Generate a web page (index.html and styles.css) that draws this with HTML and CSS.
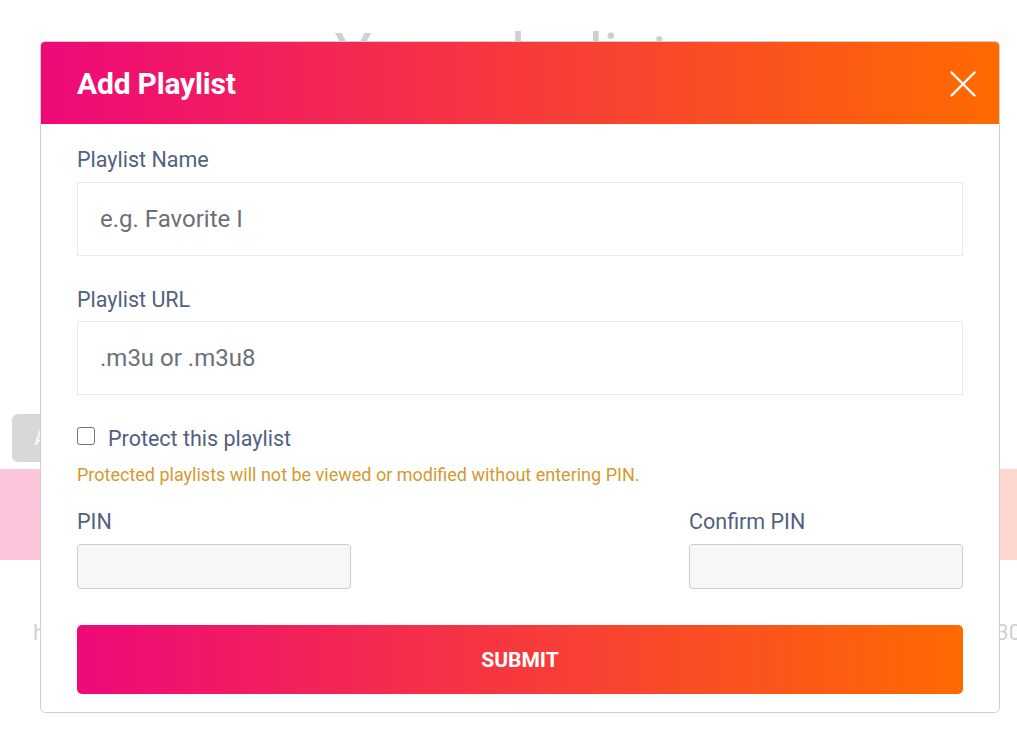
FILE: index.html
```html
<!DOCTYPE html>
<html lang="en">
<head>
<meta charset="utf-8">
<title>Add Playlist</title>
<link rel="stylesheet" href="styles.css">
</head>
<body>
<div class="page">
  <h1 class="page-title">Your playlists</h1>
  <div class="toolbar">
    <button class="ghost-btn" type="button">Add</button>
  </div>
  <div class="band"></div>
  <div class="foot-row">
    <span class="foot-left">http</span>
    <span class="foot-right">30</span>
  </div>
</div>

<div class="modal">
  <div class="modal-header">
    <h2 class="modal-title">Add Playlist</h2>
    <button class="close-btn" type="button" aria-label="Close">
      <svg width="26" height="26" viewBox="0 0 26 26"><path d="M1.5 1.5 L24.5 24.5 M24.5 1.5 L1.5 24.5" stroke="#fff" stroke-width="2.4" stroke-linecap="round" fill="none"/></svg>
    </button>
  </div>
  <form class="modal-body">
    <label class="field-label">Playlist Name</label>
    <input class="text-input" type="text" placeholder="e.g. Favorite I">
    <label class="field-label second">Playlist URL</label>
    <input class="text-input" type="text" placeholder=".m3u or .m3u8">
    <div class="check-row">
      <span class="checkbox"></span>
      <span class="check-text">Protect this playlist</span>
    </div>
    <p class="warning">Protected playlists will not be viewed or modified without entering PIN.</p>
    <div class="pin-row">
      <div class="pin-col">
        <label class="field-label">PIN</label>
        <input class="pin-input" type="password">
      </div>
      <div class="pin-col">
        <label class="field-label">Confirm PIN</label>
        <input class="pin-input" type="password">
      </div>
    </div>
    <button class="submit-btn" type="button">SUBMIT</button>
  </form>
</div>
</body>
</html>
```

FILE: styles.css
```css
* { box-sizing: border-box; }
html, body { margin: 0; padding: 0; }
body {
  font-family: Roboto, "Noto Sans", "Liberation Sans", sans-serif;
  background: #ffffff;
  width: 1017px;
  height: 747px;
  overflow: hidden;
}

/* background page (faded) */
.page { padding-top: 24px; }
.page-title {
  margin: 0;
  text-align: center;
  font-size: 62px;
  line-height: 64px;
  font-weight: 400;
  color: #cfcfcf;
  padding-left: 20px;
  white-space: nowrap;
}
.toolbar {
  margin-top: 326px;
  padding-left: 12px;
  height: 48px;
  display: flex;
}
.ghost-btn {
  width: 90px;
  height: 48px;
  border: none;
  border-radius: 6px;
  background: #d7d8da;
  color: #f4f4f4;
  font: 700 20px Roboto, sans-serif;
  padding-left: 22px;
  text-align: left;
}
.band {
  margin-top: 7px;
  height: 91px;
  background: linear-gradient(to right, #fbc5dd, #fcd0d5 50%, #fdd6cf);
}
.foot-row {
  margin-top: 60px;
  display: flex;
  justify-content: space-between;
  padding: 0 0 0 33px;
  font-size: 22px;
  color: #cdd1d8;
}
.foot-right { margin-right: -4px; }

/* modal */
.modal {
  position: fixed;
  left: 40px;
  top: 41px;
  width: 960px;
  background: #ffffff;
  border: 1px solid #cfcfcf;
  border-radius: 5px;
  overflow: hidden;
}
.modal-header {
  height: 82px;
  background: linear-gradient(to right, #ee0979, #ff6a00);
  display: flex;
  align-items: center;
  justify-content: space-between;
  padding: 0 23px 0 36px;
}
.modal-title {
  margin: 0;
  color: #ffffff;
  font-size: 30px;
  font-weight: 700;
  letter-spacing: -0.2px;
}
.close-btn {
  background: none;
  border: none;
  padding: 0;
  width: 26px;
  height: 26px;
  display: flex;
  margin-top: 2px;
}
.modal-body {
  padding: 21px 36px 18px;
  display: flex;
  flex-direction: column;
  margin: 0;
}
.field-label {
  display: block;
  font-size: 21.5px;
  line-height: 30px;
  color: #525f7f;
  margin-bottom: 7px;
}
.field-label.second { margin-top: 29px; margin-bottom: 6px; }
.text-input {
  width: 100%;
  height: 74px;
  border: 1px solid #e9e9e9;
  border-radius: 0;
  padding: 0 22px;
  font: 400 24px Roboto, sans-serif;
  color: #333;
  outline: none;
}
.text-input::placeholder { color: #6c7077; opacity: 1; }
.check-row {
  margin-top: 28px;
  display: flex;
  align-items: center;
  height: 30px;
}
.checkbox {
  width: 18px;
  height: 18px;
  border: 1.5px solid #767676;
  border-radius: 3px;
  margin-top: -4px;
}
.check-text {
  margin-left: 13px;
  font-size: 21.5px;
  color: #525f7f;
}
.warning {
  margin: 10px 0 0;
  font-size: 18px;
  line-height: 24px;
  color: #d39a30;
}
.pin-row {
  margin-top: 20px;
  display: flex;
  justify-content: space-between;
}
.pin-col { width: 274px; }
.pin-input {
  display: block;
  width: 274px;
  height: 45px;
  border: 1px solid #cccccc;
  border-radius: 4px;
  background: #f7f7f7;
  outline: none;
}
.submit-btn {
  margin-top: 36px;
  height: 69px;
  width: 100%;
  border: none;
  border-radius: 5px;
  background: linear-gradient(to right, #ee0979, #ff6a00);
  color: #ffffff;
  font: 700 21px Roboto, sans-serif;
}
```
